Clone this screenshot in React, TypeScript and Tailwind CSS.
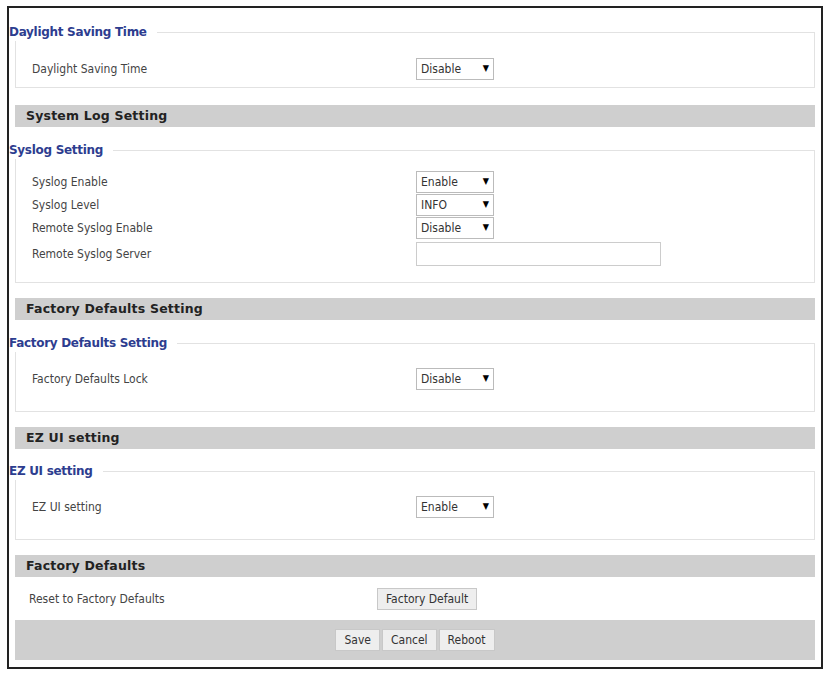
import React from "react";

const Sel = ({ v, w = "w-[78px]" }: { v: string; w?: string }) => (
  <div className={`${w} h-[22px] border border-[#bbb] bg-white flex items-center px-[4px] text-[12px] text-[#333]`}>
    <span className="flex-1">{v}</span>
    <span className="text-[9px] text-black">▼</span>
  </div>
);

const Row = ({ label, children }: { label: string; children: React.ReactNode }) => (
  <div className="flex items-center h-[23px]">
    <div className="w-[400px] pl-[16px] text-[12px] text-[#444]">{label}</div>
    {children}
  </div>
);

const Fieldset = ({ legend, h, pt, children }: { legend: string; h: string; pt: string; children: React.ReactNode }) => (
  <div className="relative ml-[6px] mr-[6px] pt-[9px]">
    <div className={`border border-[#e2e2e2] ${h} ${pt}`}>{children}</div>
    <div className="absolute left-[-6px] top-0 bg-white pr-[10px] text-[12px] font-bold text-[#2d3d8f] leading-[18px]" style={{ fontFamily: "'DejaVu Sans', sans-serif", letterSpacing: "-0.3px" }}>{legend}</div>
  </div>
);

const Header = ({ t }: { t: string }) => (
  <div className="mx-[6px] h-[22px] bg-[#cfcfcf] flex items-center pl-[11px] text-[12.5px] font-bold text-[#222]" style={{ fontFamily: "'DejaVu Sans', sans-serif", letterSpacing: "0.2px" }}>{t}</div>
);

const Btn = ({ t }: { t: string }) => (
  <div className="h-[22px] px-[8px] border border-[#c8c8c8] bg-[#eee] flex items-center text-[12px] text-[#333]">{t}</div>
);

export default function App() {
  return (
    <div className="w-[829px] h-[673px] bg-white pt-[6px] pl-[7px]" style={{ fontFamily: "'DejaVu Sans Condensed', 'Liberation Sans', sans-serif" }}>
      <div className="w-[816px] h-[663px] border-2 border-[#222] pt-[15px] flex flex-col">
        <Fieldset legend="Daylight Saving Time" h="h-[56px]" pt="pt-[24px]">
          <Row label="Daylight Saving Time"><Sel v="Disable" /></Row>
        </Fieldset>
        <div className="h-[17px] shrink-0" />
        <Header t="System Log Setting" />
        <div className="h-[14px] shrink-0" />
        <Fieldset legend="Syslog Setting" h="h-[133px]" pt="pt-[19px]">
          <Row label="Syslog Enable"><Sel v="Enable" /></Row>
          <Row label="Syslog Level"><Sel v="INFO" /></Row>
          <Row label="Remote Syslog Enable"><Sel v="Disable" /></Row>
          <div className="flex items-center h-[30px]">
            <div className="w-[400px] pl-[16px] text-[12px] text-[#444]">Remote Syslog Server</div>
            <div className="w-[245px] h-[24px] border border-[#ccc]" />
          </div>
        </Fieldset>
        <div className="h-[15px] shrink-0" />
        <Header t="Factory Defaults Setting" />
        <div className="h-[14px] shrink-0" />
        <Fieldset legend="Factory Defaults Setting" h="h-[69px]" pt="pt-[23px]">
          <Row label="Factory Defaults Lock"><Sel v="Disable" /></Row>
        </Fieldset>
        <div className="h-[15px] shrink-0" />
        <Header t="EZ UI setting" />
        <div className="h-[13px] shrink-0" />
        <Fieldset legend="EZ UI setting" h="h-[69px]" pt="pt-[23px]">
          <Row label="EZ UI setting"><Sel v="Enable" /></Row>
        </Fieldset>
        <div className="h-[15px] shrink-0" />
        <Header t="Factory Defaults" />
        <div className="flex items-center h-[43px] mx-[6px] shrink-0">
          <div className="w-[362px] pl-[14px] text-[12px] text-[#444]">Reset to Factory Defaults</div>
          <Btn t="Factory Default" />
        </div>
        <div className="mx-[6px] h-[40px] bg-[#cfcfcf] flex items-center justify-center gap-[2px] shrink-0">
          <Btn t="Save" /><Btn t="Cancel" /><Btn t="Reboot" />
        </div>
      </div>
    </div>
  );
}
